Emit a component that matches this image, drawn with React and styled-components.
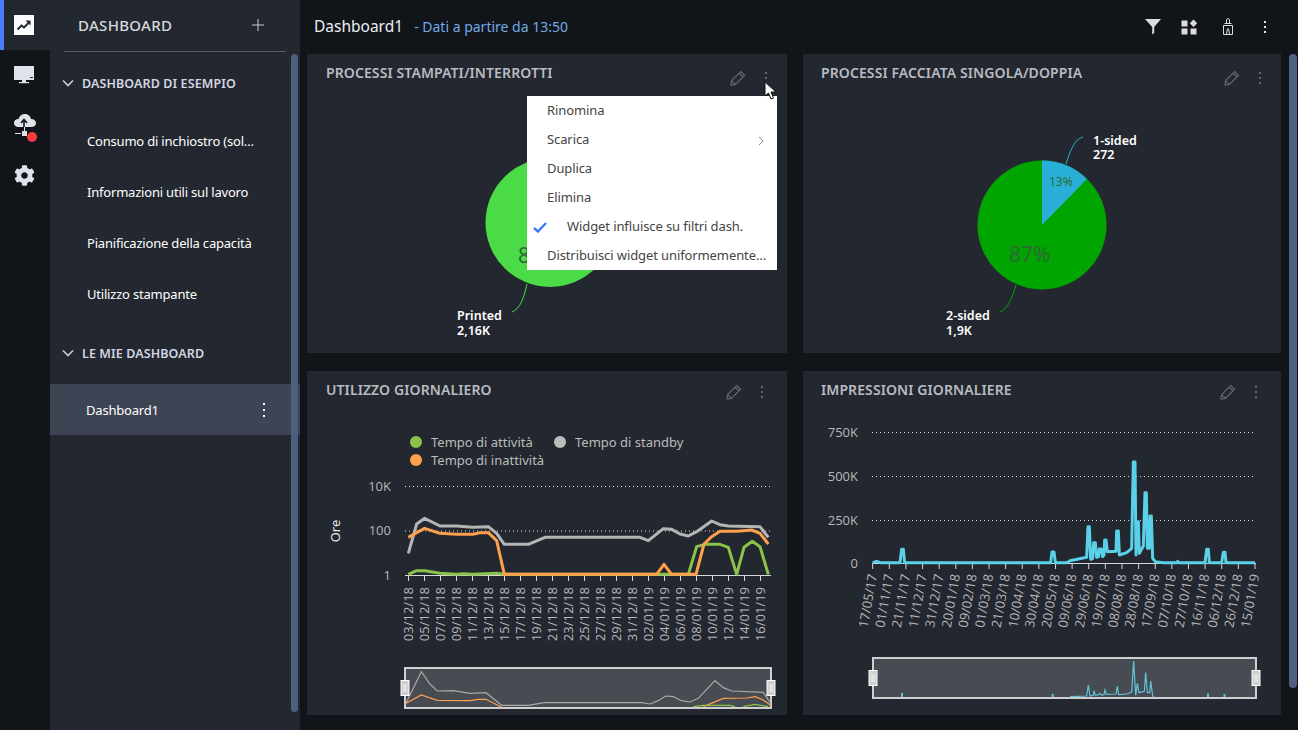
import React from "react";
import styled, { createGlobalStyle } from "styled-components";
import { FaCog } from "react-icons/fa";

const GlobalStyle = createGlobalStyle`
  html, body {
    margin: 0;
    height: 100%;
    background: #111419;
    overflow: hidden;
    font-family: "Noto Sans", "Open Sans", sans-serif;
  }
  * { box-sizing: border-box; }
`;

// zoom coordinates -> page coordinates
const pts = (list, ox, oy) => list.map(([x, y]) => `${ox + x / 3},${oy + y / 3}`).join(" ");

const standby = [[265,400],[290,312],[314,295],[360,318],[410,318],[458,322],[505,320],[530,340],[553,373],[625,373],[675,352],[960,352],[985,362],[1030,326],[1055,328],[1080,342],[1105,348],[1130,335],[1175,303],[1200,314],[1225,318],[1320,320],[1345,352]];
const idle = [[265,352],[290,338],[314,325],[360,340],[410,343],[458,343],[480,338],[505,338],[530,362],[553,463],[1010,463],[1032,433],[1055,463],[1128,463],[1152,372],[1175,350],[1200,334],[1250,334],[1295,330],[1320,340],[1345,372]];
const active = [[265,463],[290,452],[314,452],[360,460],[410,463],[430,461],[458,463],[530,460],[553,463],[1105,463],[1130,380],[1155,373],[1200,373],[1225,382],[1250,463],[1272,382],[1297,364],[1320,380],[1345,463]];

const miniStandby = [[258,370],[304,275],[330,312],[352,333],[400,332],[450,340],[498,338],[545,376],[625,376],[672,368],[965,368],[990,372],[1015,362],[1037,348],[1060,350],[1085,362],[1110,366],[1135,355],[1185,302],[1210,323],[1235,333],[1330,337],[1352,370]];
const miniIdle = [[258,370],[304,345],[352,361],[450,362],[475,358],[498,358],[545,382]];
const miniIdle2 = [[1150,380],[1210,355],[1280,354],[1305,350],[1330,360],[1352,376]];
const miniActive = [[1120,380],[1150,376],[1230,376],[1245,380]];
const miniActive2 = [[1270,380],[1305,373],[1345,380]];

const impressions = [[188,428],[200,424],[212,428],[270,428],[275,388],[280,388],[284,428],[722,428],[726,396],[732,396],[736,428],[770,428],[780,422],[830,412],[834,320],[838,320],[842,418],[848,416],[851,368],[856,368],[860,412],[866,410],[868,387],[874,387],[878,410],[882,405],[884,360],[888,360],[892,395],[918,394],[920,333],[925,333],[928,405],[950,398],[965,385],[970,126],[975,126],[978,405],[980,305],[985,305],[988,400],[1000,378],[1005,218],[1009,218],[1012,385],[1018,385],[1020,288],[1024,288],[1028,415],[1036,425],[1060,428],[1100,428],[1103,424],[1106,428],[1185,428],[1190,388],[1195,388],[1198,428],[1235,428],[1240,397],[1245,397],[1248,428],[1335,428]];
const miniImpressions = [[780,380],[830,378],[835,345],[840,378],[850,376],[852,362],[856,376],[866,374],[870,370],[875,375],[882,374],[885,360],[889,373],[918,372],[922,348],[926,374],[950,372],[965,366],[971,273],[977,376],[982,340],[987,368],[1003,364],[1007,308],[1012,368],[1019,368],[1022,333],[1028,378],[1032,381]];

const leftDates = ["03/12/18","05/12/18","07/12/18","09/12/18","11/12/18","13/12/18","15/12/18","17/12/18","19/12/18","21/12/18","23/12/18","25/12/18","27/12/18","29/12/18","31/12/18","02/01/19","04/01/19","06/01/19","08/01/19","10/01/19","12/01/19","14/01/19","16/01/19"];
const rightDates = ["17/05/17","01/11/17","21/11/17","11/12/17","31/12/17","20/01/18","09/02/18","01/03/18","21/03/18","10/04/18","30/04/18","20/05/18","09/06/18","29/06/18","19/07/18","08/08/18","28/08/18","17/09/18","07/10/18","27/10/18","16/11/18","06/12/18","26/12/18","15/01/19"];

const sampleBoards = ["Consumo di inchiostro (sol…", "Informazioni utili sul lavoro", "Pianificazione della capacità", "Utilizzo stampante"];

function Dots({ color = "#fff", gap = 4 }) {
  return (
    <DotsBox $color={color} $gap={gap}>
      <i /><i /><i />
    </DotsBox>
  );
}

function Pencil() {
  return (
    <svg width="16" height="16" viewBox="0 0 16 16" fill="none" stroke="#62666e" strokeWidth="1.2">
      <path d="M1 15 L1.6 10.6 L10.8 1.6 L14.6 5.2 L5.4 14.4 Z M9.2 3.2 L13 6.8 M1.6 10.6 L5.4 14.4" />
    </svg>
  );
}

function Chevron() {
  return (
    <svg width="12" height="8" viewBox="0 0 12 8" fill="none" stroke="#c9ccd3" strokeWidth="1.7">
      <path d="M1 1.5 L6 6.5 L11 1.5" />
    </svg>
  );
}

function Navigator({ x, y, width, children }) {
  return (
    <g>
      <rect x={x} y={y} width={width} height={40} fill="#474b52" stroke="#cfcfcf" strokeWidth="2" />
      {children}
      {[x, x + width].map((hx) => (
        <g key={hx}>
          <rect x={hx - 4} y={y + 12.5} width={8} height={15} fill="#cfcfcf" stroke="#fff" strokeWidth="1" />
          <path d={`M${hx - 1} ${y + 16} V${y + 24} M${hx + 1} ${y + 16} V${y + 24}`} stroke="#fff" strokeWidth="0.8" />
        </g>
      ))}
    </g>
  );
}

function PrintedPie() {
  return (
    <ChartSvg width="480" height="263" viewBox="307 90 480 263">
      <circle cx="550" cy="222.5" r="64.5" fill="#4bdb47" />
      <PieValue x="518" y="263" fontSize="21">87%</PieValue>
      <path d="M527 284 C524 298 520 309 512 312" fill="none" stroke="#4bdb47" />
      <PieLabel x="457" y="320">Printed</PieLabel>
      <PieLabel x="457" y="335">2,16K</PieLabel>
    </ChartSvg>
  );
}

function SidesPie() {
  return (
    <ChartSvg width="478" height="263" viewBox="803 90 478 263">
      <circle cx="1042" cy="225" r="64.5" fill="#00a500" />
      <path d="M1042 225 L1042 160.5 A64.5 64.5 0 0 1 1087 179 Z" fill="#29afd6" />
      <PieValue x="1049" y="186" fontSize="12" fill="#34525f">13%</PieValue>
      <PieValue x="1009" y="262" fontSize="21" fill="#33593a">87%</PieValue>
      <path d="M1066 164 C1070 152 1074 139 1083 137" fill="none" stroke="#29afd6" />
      <path d="M1016 285 C1012 298 1008 309 1000 312" fill="none" stroke="#00a500" />
      <PieLabel x="1093" y="145">1-sided</PieLabel>
      <PieLabel x="1093" y="159">272</PieLabel>
      <PieLabel x="946" y="320">2-sided</PieLabel>
      <PieLabel x="946" y="335">1,9K</PieLabel>
    </ChartSvg>
  );
}

function UsageChart() {
  return (
    <ChartSvg width="480" height="308" viewBox="307 407 480 308">
      <circle cx="416" cy="442" r="6" fill="#8bc34a" />
      <LegendText x="431" y="447">Tempo di attività</LegendText>
      <circle cx="560" cy="442" r="6" fill="#bdbdbd" />
      <LegendText x="575" y="447">Tempo di standby</LegendText>
      <circle cx="416" cy="460" r="6" fill="#ffa04d" />
      <LegendText x="431" y="465">Tempo di inattività</LegendText>

      <GridLine x1="405" x2="771" y1="486.5" y2="486.5" />
      <GridLine x1="405" x2="771" y1="531" y2="531" />
      <TickText x="391" y="491" textAnchor="end">10K</TickText>
      <TickText x="391" y="535" textAnchor="end">100</TickText>
      <TickText x="391" y="580" textAnchor="end">1</TickText>
      <AxisTitle transform="translate(340 531) rotate(-90)" textAnchor="middle">Ore</AxisTitle>

      <line x1="405" x2="771" y1="575.5" y2="575.5" stroke="#d8d8d8" />
      {leftDates.map((d, i) => (
        <g key={d}>
          <line x1={408.5 + i * 16} x2={408.5 + i * 16} y1="576" y2="581" stroke="#d8d8d8" />
          <TickText fontSize="12.5" textAnchor="end" transform={`translate(${413 + i * 16} 587) rotate(-90)`}>{d}</TickText>
        </g>
      ))}

      <SeriesLine points={pts(active, 320, 420)} stroke="#8bc34a" />
      <SeriesLine points={pts(standby, 320, 420)} stroke="#b5b5b5" />
      <SeriesLine points={pts(idle, 320, 420)} stroke="#ffa04d" />

      <Navigator x={405} y={668} width={366}>
        <MiniLine points={pts(miniStandby, 320, 580)} stroke="#a8a8a8" />
        <MiniLine points={pts(miniIdle, 320, 580)} stroke="#ffa04d" />
        <MiniLine points={pts(miniIdle2, 320, 580)} stroke="#ffa04d" />
        <MiniLine points={pts(miniActive, 320, 580)} stroke="#8bc34a" />
        <MiniLine points={pts(miniActive2, 320, 580)} stroke="#8bc34a" />
      </Navigator>
    </ChartSvg>
  );
}

function ImpressionsChart() {
  return (
    <ChartSvg width="478" height="308" viewBox="803 407 478 308">
      {[432, 476, 520].map((y) => (
        <GridLine key={y} x1="872" x2="1256" y1={y + 0.5} y2={y + 0.5} />
      ))}
      <TickText x="858" y="437" textAnchor="end">750K</TickText>
      <TickText x="858" y="481" textAnchor="end">500K</TickText>
      <TickText x="858" y="525" textAnchor="end">250K</TickText>
      <TickText x="858" y="568" textAnchor="end">0</TickText>

      <line x1="872" x2="1256" y1="563.5" y2="563.5" stroke="#d8d8d8" />
      {rightDates.map((d, i) => (
        <g key={d}>
          <line x1={872.7 + i * 16.62} x2={872.7 + i * 16.62} y1="564" y2="569" stroke="#d8d8d8" />
          <TickText fontSize="12.5" textAnchor="end" transform={`translate(${877 + i * 16.62} 575) rotate(-80)`}>{d}</TickText>
        </g>
      ))}

      <SeriesLine points={pts(impressions, 810, 420)} stroke="#5ad1e8" />

      <Navigator x={873} y={658} width={383}>
        <MiniLine points={pts(miniImpressions, 810, 570)} stroke="#63c3d6" />
        <line x1="902" x2="902" y1="693" y2="697" stroke="#63c3d6" strokeWidth="2" />
        <line x1="1052.7" x2="1052.7" y1="694" y2="697" stroke="#63c3d6" strokeWidth="2" />
        <line x1="1208" x2="1208" y1="693.5" y2="697" stroke="#63c3d6" strokeWidth="2" />
        <line x1="1224.5" x2="1224.5" y1="694" y2="697" stroke="#63c3d6" strokeWidth="2" />
      </Navigator>
    </ChartSvg>
  );
}

function WidgetCard({ title, inset, left = 19, drop = 11, children }) {
  return (
    <Card>
      <CardHeader $inset={inset} $left={left}>
        <CardTitle>{title}</CardTitle>
        <CardActions $drop={drop}>
          <Pencil />
          <Dots color="#62666e" gap={3} />
        </CardActions>
      </CardHeader>
      {children}
    </Card>
  );
}

export default function App() {
  return (
    <Shell>
      <GlobalStyle />
      <Rail>
        <RailItem $active>
          <svg width="20" height="20" viewBox="0 0 20 20">
            <rect width="20" height="20" fill="#fafbfd" />
            <path d="M3.5 14.5 L7.5 10.5 L10 12.5 L14.5 8" fill="none" stroke="#23272f" strokeWidth="2" />
            <path d="M11.5 5.5 H16.5 V10.5 Z" fill="#23272f" />
          </svg>
        </RailItem>
        <RailItem>
          <svg width="20" height="18" viewBox="0 0 20 18">
            <rect x="0" y="0" width="20" height="14" fill="#dfe2e8" />
            <rect x="16" y="11" width="3" height="1" fill="#23272f" />
            <rect x="8" y="14" width="4" height="2" fill="#dfe2e8" />
            <rect x="5" y="16" width="10" height="1.2" fill="#dfe2e8" />
          </svg>
        </RailItem>
        <RailItem>
          <CloudBox>
            <svg width="24" height="26" viewBox="0 0 24 26">
              <path d="M7 15 C3.5 15 2 13 2 11 C2 8.5 4 7 6.5 7 C7.5 3.5 10 2 13 2 C16.5 2 18.5 4.5 19 7 C22 7 24 9 24 11 C24 13.5 22 15 19 15 Z" fill="#dfe2e8" />
              <path d="M12 15 V9 M9 11 L12 7.5 L15 11" fill="none" stroke="#111419" strokeWidth="1.6" />
              <rect x="12" y="15" width="1" height="4" fill="#dfe2e8" />
              <rect x="3" y="21" width="6" height="1" fill="#dfe2e8" />
              <rect x="10" y="19" width="5" height="5" fill="#dfe2e8" />
            </svg>
            <RedDot />
          </CloudBox>
        </RailItem>
        <RailItem>
          <FaCog size={21} color="#dfe2e8" />
        </RailItem>
      </Rail>

      <Sidebar>
        <SidebarHead>
          <SidebarTitle>DASHBOARD</SidebarTitle>
          <AddButton>
            <svg width="12" height="12" viewBox="0 0 12 12" stroke="#c9ccd3" strokeWidth="1">
              <path d="M6 0 V12 M0 6 H12" />
            </svg>
          </AddButton>
        </SidebarHead>
        <SidebarNav>
          <Section>
            <SectionHead><Chevron />DASHBOARD DI ESEMPIO</SectionHead>
            <BoardList>
              {sampleBoards.map((b) => (
                <BoardRow key={b}>{b}</BoardRow>
              ))}
            </BoardList>
          </Section>
          <Section>
            <SectionHead><Chevron />LE MIE DASHBOARD</SectionHead>
            <BoardList>
              <BoardRow $active>
                Dashboard1
                <Dots />
              </BoardRow>
            </BoardList>
          </Section>
        </SidebarNav>
        <SideScroll />
      </Sidebar>

      <Main>
        <TopBar>
          <PageTitle>Dashboard1</PageTitle>
          <PageStatus>- Dati a partire da 13:50</PageStatus>
          <TopActions>
            <TopButton $w={36}>
              <svg width="16" height="16" viewBox="0 0 16 16">
                <path d="M0 0 H16 L9.2 8 V14 L7.2 15.5 V8 Z" fill="#dcdcdc" />
              </svg>
            </TopButton>
            <TopButton $w={36}>
              <svg width="17" height="16" viewBox="0 0 17 16">
                <path d="M0.5 1.5 H6.5 V7.5 H0.5 Z M0.5 9.5 H6.5 V15.5 H0.5 Z M9.5 9.5 H15.5 V15.5 H9.5 Z" fill="#dcdcdc" />
                <path d="M12.5 0.5 L16.2 4.2 L12.5 7.9 L8.8 4.2 Z" fill="#dcdcdc" />
              </svg>
            </TopButton>
            <TopButton $w={42}>
              <svg width="10" height="17" viewBox="0 0 10 17" fill="none" stroke="#dcdcdc" strokeWidth="1">
                <path d="M3.5 5 V1.5 Q5 -0.5 6.5 1.5 V5 M1.5 5.5 H8.5 M0.5 7.5 H9.5 M0.5 7.5 V16.5 H9.5 V7.5 M3.5 16 L4.5 10.5 M6.5 16 L5.5 10.5" />
              </svg>
            </TopButton>
            <TopButton $w={32}>
              <Dots color="#e4e4e4" gap={3} />
            </TopButton>
          </TopActions>
        </TopBar>

        <Widgets>
          <WidgetCard title="PROCESSI STAMPATI/INTERROTTI" inset={20}>
            <PrintedPie />
            <ContextMenu>
              <MenuItem>Rinomina</MenuItem>
              <MenuItem>
                Scarica
                <MenuArrow width="6" height="10" viewBox="0 0 6 10" fill="none" stroke="#8c8c8c">
                  <path d="M1 1 L5 5 L1 9" />
                </MenuArrow>
              </MenuItem>
              <MenuItem>Duplica</MenuItem>
              <MenuItem>Elimina</MenuItem>
              <MenuItem $checked>
                <MenuCheck width="14" height="11" viewBox="0 0 14 11" fill="none" stroke="#3d7bf5" strokeWidth="2.4">
                  <path d="M1 6 L5 9.5 L13 1" />
                </MenuCheck>
                Widget influisce su filtri dash.
              </MenuItem>
              <MenuItem>Distribuisci widget uniformemente…</MenuItem>
            </ContextMenu>
            <Cursor width="13" height="19" viewBox="0 0 13 19">
              <path d="M1 1 V15 L4.5 12 L7 18 L9.5 17 L7 11 H12 Z" fill="#fff" stroke="#111" strokeWidth="1" />
            </Cursor>
          </WidgetCard>
          <WidgetCard title="PROCESSI FACCIATA SINGOLA/DOPPIA" inset={20} left={18}>
            <SidesPie />
          </WidgetCard>
          <WidgetCard title="UTILIZZO GIORNALIERO" inset={24} drop={6}>
            <UsageChart />
          </WidgetCard>
          <WidgetCard title="IMPRESSIONI GIORNALIERE" inset={24} left={18} drop={6}>
            <ImpressionsChart />
          </WidgetCard>
        </Widgets>
        <PageScroll />
      </Main>
    </Shell>
  );
}

const Shell = styled.div`
  display: flex;
  width: 100%;
  height: 730px;
  background: #111419;
  overflow: hidden;
`;

// left icon rail
const Rail = styled.nav`
  display: flex;
  flex-direction: column;
  flex: 0 0 50px;
`;

const RailItem = styled.div`
  display: flex;
  justify-content: center;
  align-items: center;
  height: 50px;
  padding-right: ${(p) => (p.$active ? "6px" : "2px")};
  background: ${(p) => (p.$active ? "#23272f" : "transparent")};
  border-left: ${(p) => (p.$active ? "4px solid #4a7cff" : "0")};
  svg { display: block; }
`;

const CloudBox = styled.div`
  position: relative;
  width: 24px;
  height: 26px;
`;

const RedDot = styled.span`
  position: absolute;
  right: -1px;
  bottom: -4px;
  width: 10px;
  height: 10px;
  border-radius: 50%;
  background: #f53d3d;
`;

// dashboards list
const Sidebar = styled.aside`
  position: relative;
  flex: 0 0 250px;
  background: #23272f;
  color: #fff;
`;

const SidebarHead = styled.header`
  display: flex;
  justify-content: space-between;
  align-items: center;
  height: 52px;
  margin-left: 14px;
  margin-right: 14px;
  padding: 0 22px 2px 14px;
  border-bottom: 1px solid #5a5e67;
`;

const SidebarTitle = styled.h1`
  margin: 0;
  font-size: 15px;
  font-weight: 500;
  letter-spacing: 0.3px;
  color: #d8dade;
`;

const AddButton = styled.span`
  display: flex;
  svg { display: block; }
`;

const SidebarNav = styled.div`
  padding-top: 11px;
`;

const Section = styled.section`
  & + & { margin-top: 14px; }
`;

const SectionHead = styled.h2`
  display: flex;
  align-items: center;
  gap: 8px;
  height: 40px;
  margin: 0;
  padding-left: 12px;
  font-size: 12.5px;
  font-weight: 600;
  letter-spacing: 0.1px;
  color: #d3d6e2;
`;

const BoardList = styled.div`
  margin-top: 11px;
  ${Section}:first-child & { margin-top: 12px; }
`;

const BoardRow = styled.div`
  display: flex;
  justify-content: space-between;
  align-items: center;
  width: 250px;
  height: 51px;
  padding: ${(p) => (p.$active ? "1px" : "0")} 35px 0 ${(p) => (p.$active ? "36px" : "37px")};
  font-size: 13px;
  letter-spacing: -0.2px;
  color: #fff;
  background: ${(p) => (p.$active ? "#3e4454" : "transparent")};
`;

const DotsBox = styled.span`
  display: inline-flex;
  flex-direction: column;
  gap: ${(p) => p.$gap}px;
  i {
    display: block;
    width: 2px;
    height: 2px;
    background: ${(p) => p.$color};
  }
`;

const SideScroll = styled.div`
  position: absolute;
  top: 54px;
  left: 241px;
  width: 7px;
  height: 658px;
  border-radius: 4px;
  background: #4f5f80;
`;

const Main = styled.main`
  position: relative;
  flex: 1;
  min-width: 0;
`;

const TopBar = styled.header`
  display: flex;
  align-items: center;
  height: 53px;
  padding-left: 14px;
`;

const PageTitle = styled.div`
  margin-bottom: 2px;
  font-size: 15.5px;
  color: #eceef2;
`;

const PageStatus = styled.div`
  margin-left: 11px;
  margin-bottom: 1px;
  font-size: 14px;
  color: #74aae4;
`;

const TopActions = styled.div`
  display: flex;
  align-items: center;
  margin-left: auto;
  padding-right: 17px;
`;

const TopButton = styled.span`
  display: flex;
  justify-content: center;
  align-items: center;
  width: ${(p) => p.$w}px;
  svg { display: block; }
`;

const Widgets = styled.div`
  display: grid;
  grid-template-columns: 480px 478px;
  grid-template-rows: 299px 344px;
  column-gap: 16px;
  row-gap: 18px;
  padding: 1px 0 0 7px;
`;

const Card = styled.article`
  position: relative;
  display: flex;
  flex-direction: column;
  background: #23272f;
  overflow: hidden;
`;

const CardHeader = styled.div`
  display: flex;
  justify-content: space-between;
  align-items: center;
  height: 36px;
  padding: 0 ${(p) => p.$inset}px 0 ${(p) => p.$left}px;
`;

const CardTitle = styled.h3`
  margin: 0;
  font-size: 14px;
  font-weight: 600;
  letter-spacing: 0.1px;
  color: #b9bbc0;
`;

const CardActions = styled.div`
  display: flex;
  align-items: center;
  gap: 19px;
  margin-top: ${(p) => p.$drop}px;
`;

const ChartSvg = styled.svg`
  display: block;
  flex: none;
`;

const PieLabel = styled.text`
  font-family: "Noto Sans", sans-serif;
  font-size: 12.5px;
  font-weight: 600;
  fill: #fff;
`;

const PieValue = styled.text`
  font-family: "Noto Sans", sans-serif;
  font-weight: 400;
  fill: #2f6a36;
`;

const LegendText = styled.text`
  font-family: "Noto Sans", sans-serif;
  font-size: 13px;
  fill: #bcbcbc;
`;

const TickText = styled.text`
  font-family: "Open Sans", sans-serif;
  font-size: 13px;
  fill: #b8b8b8;
`;

const AxisTitle = styled.text`
  font-family: "Noto Sans", sans-serif;
  font-size: 13px;
  fill: #e6e6e6;
`;

const GridLine = styled.line`
  stroke: #e0e0e0;
  stroke-width: 1;
  stroke-dasharray: 1 3;
`;

const SeriesLine = styled.polyline`
  fill: none;
  stroke-width: 3;
  stroke-linejoin: round;
`;

const MiniLine = styled.polyline`
  fill: none;
  stroke-width: 1.2;
`;

// row menu of the first widget
const ContextMenu = styled.ul`
  position: absolute;
  top: 42px;
  left: 220px;
  width: 250px;
  height: 174px;
  margin: 0;
  padding: 0;
  list-style: none;
  background: #fff;
`;

const MenuItem = styled.li`
  position: relative;
  display: flex;
  align-items: center;
  height: 29px;
  padding-left: ${(p) => (p.$checked ? "40px" : "20px")};
  padding-bottom: 2px;
  font-size: 13px;
  letter-spacing: -0.1px;
  color: #444;
  white-space: nowrap;
`;

const MenuArrow = styled.svg`
  position: absolute;
  right: 13px;
  top: 11px;
`;

const MenuCheck = styled.svg`
  position: absolute;
  left: 6px;
  top: 10px;
`;

const Cursor = styled.svg`
  position: absolute;
  left: 457px;
  top: 27px;
`;

const PageScroll = styled.div`
  position: absolute;
  top: 54px;
  left: 989px;
  width: 8px;
  height: 634px;
  border-radius: 4px;
  background: #4f5f80;
`;
